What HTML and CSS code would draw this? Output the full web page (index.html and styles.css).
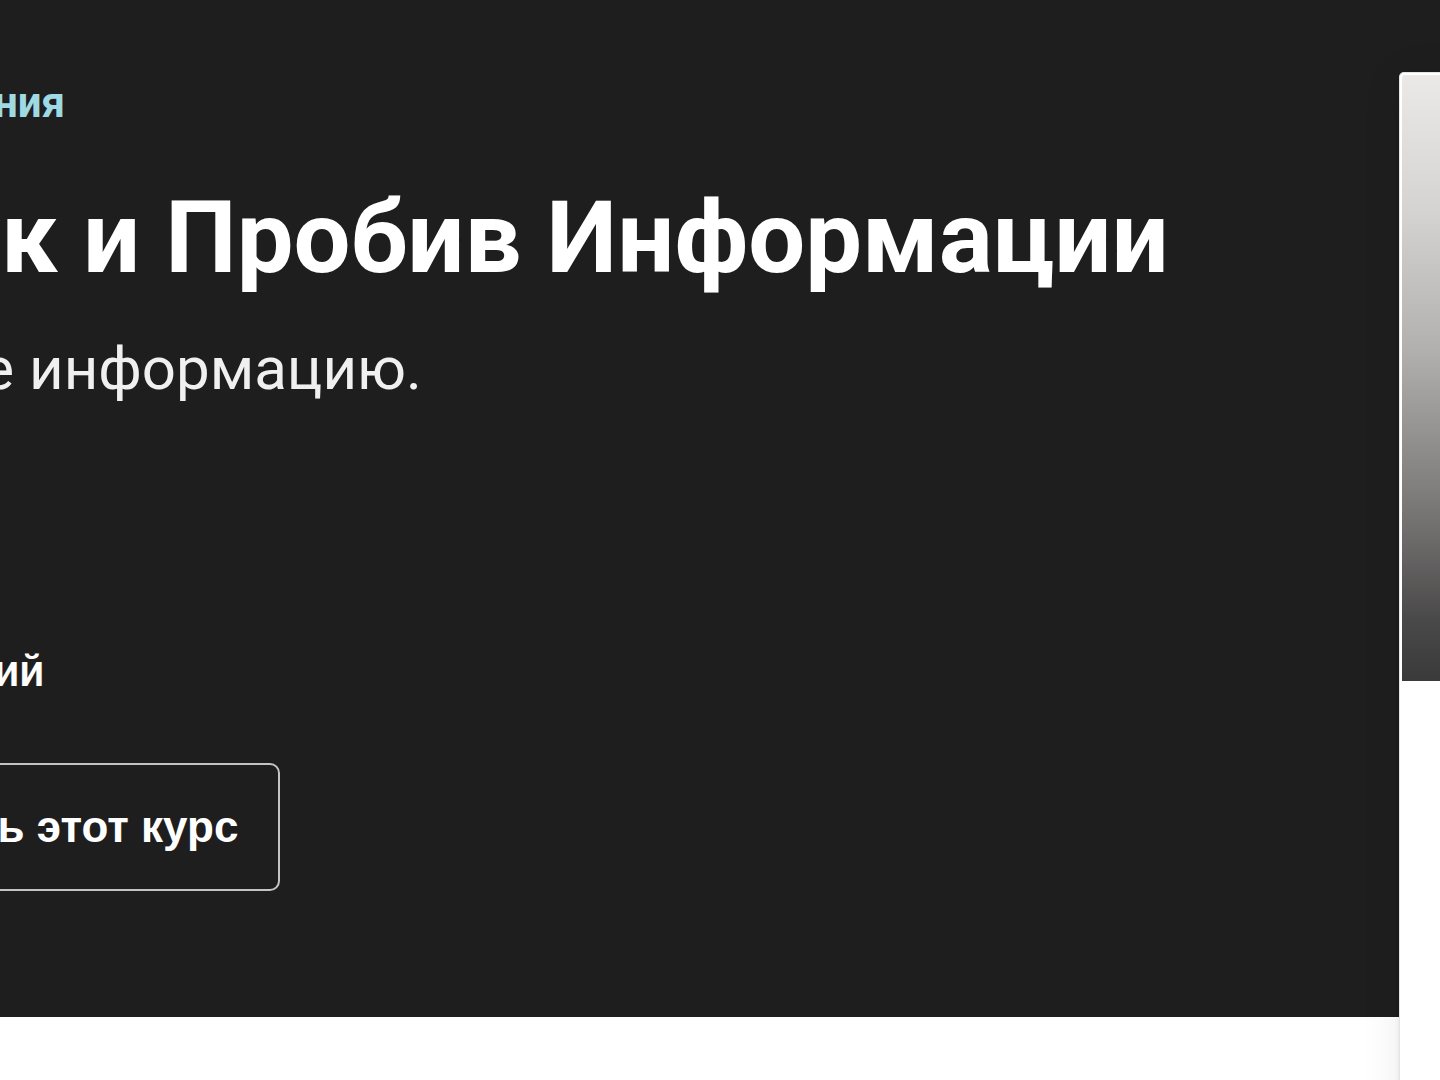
FILE: index.html
```html
<!DOCTYPE html>
<html lang="ru">
<head>
    <meta charset="UTF-8">
    <meta name="viewport" content="width=device-width, initial-scale=1.0">
    <title>OSINT: Чек и Пробив Информации</title>
    <link rel="stylesheet" href="styles.css">
</head>
<body>
    <header class="course-header">
        <div class="header-inner">
            <nav class="breadcrumbs">
                <a href="#">ИТ и ПО</a>
                <svg class="chevron" viewBox="0 0 24 24"><path d="M9 5l7 7-7 7" fill="none" stroke="currentColor" stroke-width="3"/></svg>
                <a href="#">Расследования</a>
            </nav>
            <h1 class="course-title">OSINT: Чек и Пробив Информации</h1>
            <p class="course-subtitle">Быстро находите информацию.</p>
            <div class="course-meta">
                <span class="meta-item">
                    <svg class="meta-icon" viewBox="0 0 24 24"><circle cx="12" cy="12" r="9" fill="none" stroke="currentColor" stroke-width="2"/><path d="M12 7v5l3 3" fill="none" stroke="currentColor" stroke-width="2"/></svg>
                    10/2023
                </span>
                <span class="meta-item">
                    <svg class="meta-icon" viewBox="0 0 24 24"><circle cx="12" cy="12" r="9" fill="none" stroke="currentColor" stroke-width="2"/><path d="M3 12h18M12 3c3 3 3 15 0 18M12 3c-3 3-3 15 0 18" fill="none" stroke="currentColor" stroke-width="2"/></svg>
                    Русский
                </span>
            </div>
            <div class="header-actions">
                <button class="btn-outline btn-share">Поделиться</button>
                <button class="btn-outline">Купить этот курс</button>
            </div>
        </div>
    </header>

    <aside class="sidebar-card">
        <div class="preview"></div>
        <div class="card-body"></div>
    </aside>
</body>
</html>
```

FILE: styles.css
```css
* {
    box-sizing: border-box;
}
html, body {
    margin: 0;
    padding: 0;
    height: 100%;
    overflow: hidden;
}
body {
    font-family: 'Roboto', 'Liberation Sans', sans-serif;
    background: #fff;
    color: #fff;
    position: relative;
}
.course-header {
    background: #1f1e1e;
    height: 1017px;
    padding: 73px 0 0 0;
    overflow: hidden;
}
.header-inner {
    margin-left: -471px;
    white-space: nowrap;
}
.breadcrumbs {
    display: flex;
    align-items: center;
    gap: 22px;
    height: 60px;
    font-size: 42px;
    font-weight: 700;
    line-height: 60px;
}
.breadcrumbs a {
    color: #9fd9e3;
    text-decoration: none;
}
.chevron {
    width: 28px;
    height: 28px;
    color: #fff;
}
.course-title {
    margin: 45px 0 0 0;
    font-size: 101px;
    font-weight: 700;
    line-height: 120px;
    color: #fff;
}
.course-subtitle {
    margin: 35px 0 0 0;
    font-size: 60px;
    font-weight: 400;
    line-height: 72px;
    color: #f0f0f0;
}
.course-meta {
    display: flex;
    gap: 58px;
    margin-top: 236px;
    font-size: 44px;
    line-height: 60px;
    font-weight: 500;
}
.meta-item {
    display: flex;
    align-items: center;
    gap: 20px;
}
.meta-icon {
    width: 40px;
    height: 40px;
}
.header-actions {
    display: flex;
    gap: 16px;
    margin-top: 62px;
}
.btn-outline {
    font-family: 'Liberation Sans', Arial, sans-serif;
    font-size: 44px;
    font-weight: 700;
    line-height: 60px;
    padding: 32px 40px;
    background: transparent;
    color: #fff;
    border: 2px solid #c4c4c4;
    border-radius: 10px;
}
.btn-share {
    padding: 32px 8px;
}
.sidebar-card {
    position: absolute;
    top: 72px;
    left: 1399px;
    width: 640px;
    height: 1200px;
    background: #fff;
    border: 1px solid #e4e4e4;
    border-bottom: none;
    border-radius: 5px 0 0 0;
    padding: 2px 0 0 2px;
    box-shadow: 0 2px 4px rgba(0, 0, 0, 0.08), 0 4px 40px rgba(0, 0, 0, 0.08);
}
.preview {
    height: 606px;
    border-radius: 3px 0 0 0;
    background: linear-gradient(180deg, #ebe9e7 0%, #d6d4d2 22%, #b3b1af 45%, #7d7b7a 70%, #4a4949 90%, #3b3a3a 100%);
}
.card-body {
    background: #fff;
}
```
